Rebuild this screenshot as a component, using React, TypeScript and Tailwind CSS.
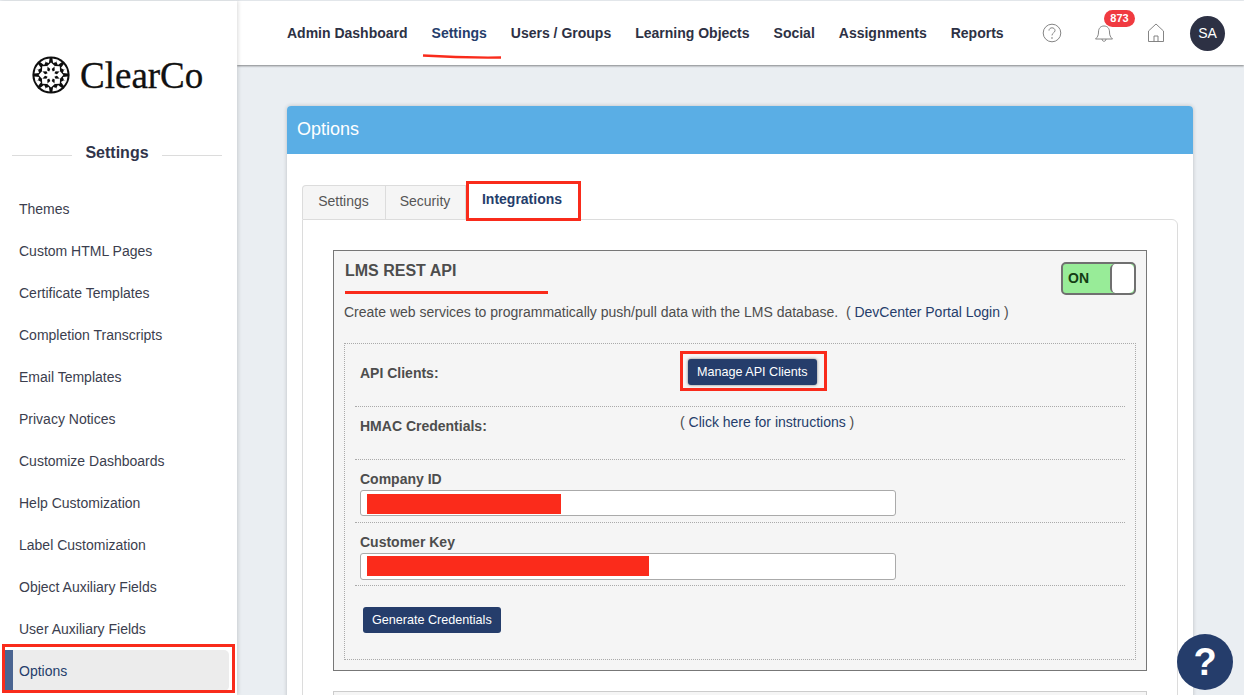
import React from "react";

const items = [
  "Themes",
  "Custom HTML Pages",
  "Certificate Templates",
  "Completion Transcripts",
  "Email Templates",
  "Privacy Notices",
  "Customize Dashboards",
  "Help Customization",
  "Label Customization",
  "Object Auxiliary Fields",
  "User Auxiliary Fields",
];

const nav = ["Admin Dashboard", "Settings", "Users / Groups", "Learning Objects", "Social", "Assignments", "Reports"];

function Rosette() {
  const ring = Array.from({ length: 8 }, (_, i) => i * 45);
  return (
    <svg width="38" height="38" viewBox="0 0 38 38" className="shrink-0">
      <circle cx="19" cy="19" r="18.6" fill="#0e0e0e" />
      {ring.map((a) => (
        <g key={a} transform={`rotate(${a} 19 19)`}>
          <path d="M19 6.6 L23 10.2 L19 13.6 L15 10.2 Z" fill="#fff" />
          <path d="M19 2.2 L24 3.2 L21.6 7.2 L19 5 Z" fill="#fff" transform="rotate(22.5 19 19)" />
          <path d="M19 2.2 L14 3.2 L16.4 7.2 L19 5 Z" fill="#fff" transform="rotate(22.5 19 19)" />
        </g>
      ))}
      <path d="M19 11.5 L20.8 15.6 L24.3 13.7 L22.4 17.2 L26.5 19 L22.4 20.8 L24.3 24.3 L20.8 22.4 L19 26.5 L17.2 22.4 L13.7 24.3 L15.6 20.8 L11.5 19 L15.6 17.2 L13.7 13.7 L17.2 15.6 Z" fill="#fff" />
    </svg>
  );
}

function Label({ children }: { children: React.ReactNode }) {
  return <div className="text-[14px] leading-[20px] font-bold text-[#4d4d4d]">{children}</div>;
}

export default function App() {
  return (
    <div className="relative flex h-[695px] w-[1244px] overflow-hidden bg-[#eaeef2] text-[14px] font-['Liberation_Sans',sans-serif]">
      <aside className="z-10 mt-px flex w-[237px] shrink-0 flex-col bg-white shadow-[1px_0_4px_rgba(0,0,0,0.15)]">
        <div className="flex h-[93px] items-end pl-[32px]">
          <Rosette />
          <span className="mb-[-2px] ml-[10px] font-['Liberation_Serif',serif] text-[37px] leading-[40px] text-[#111] [-webkit-text-stroke:0.3px_#111]">ClearCo</span>
        </div>
        <div className="mt-[47px] flex items-center pl-[12px] pr-[15px]">
          <div className="mt-[4px] h-px w-[60px] bg-[#dcdcdc]" />
          <div className="flex-1 text-center text-[16px] leading-[24px] font-bold text-[#30344a]">Settings</div>
          <div className="mt-[4px] h-px w-[60px] bg-[#dcdcdc]" />
        </div>
        <ul className="mt-[23px] flex flex-col">
          {items.map((t) => (
            <li key={t} className="flex h-[42px] items-center pl-[19px] text-[14px] text-[#3b3e4e]">
              {t}
            </li>
          ))}
          <li className="relative ml-[5px] mr-[8px] flex h-[41px] items-center rounded-r-[5px] border-l-[8px] border-[#4a6491] bg-[#ececec] pl-[6px] pt-[2px] text-[#253d6b]">
            Options
            <span className="absolute bottom-[-2px] left-[-11px] right-[-6px] top-[-6px] border-[3px] border-[#f92b1b]" />
          </li>
        </ul>
      </aside>

      <div className="flex min-w-0 flex-1 flex-col">
        <header className="mt-px flex h-[64px] shrink-0 items-center bg-white pl-[50px] pr-[19px] shadow-[0_1px_2px_rgba(0,0,0,0.45)]">
          <nav className="flex gap-[24px]">
            {nav.map((n) => (
              <div key={n} className="relative whitespace-nowrap">
                <span className={`text-[14px] font-bold ${n === "Settings" ? "text-[#253d6b]" : "text-[#2d3144]"}`}>{n}</span>
                {n === "Settings" && (
                  <svg width="80" height="6" viewBox="0 0 80 6" className="absolute left-[-10px] top-[31px]">
                    <path d="M1 1.5 Q40 4 79 3.5" stroke="#f92b1b" strokeWidth="2.4" fill="none" />
                  </svg>
                )}
              </div>
            ))}
          </nav>
          <div className="ml-auto flex items-center">
            <svg width="20" height="20" viewBox="0 0 20 20" fill="none" stroke="#777" strokeWidth="0.9">
              <circle cx="10" cy="10" r="8.8" />
              <path d="M7 7.6 C7 3.9 13 3.9 13 7.6 C13 9.8 10 9.8 10 12.4" />
              <circle cx="10" cy="15" r="0.4" />
            </svg>
            <div className="relative ml-[32px]">
              <svg width="20" height="20" viewBox="0 0 20 20" fill="none" stroke="#777" strokeWidth="0.9" className="block">
                <path d="M1.5 16 C3.5 14 4.5 12.5 4.5 9 C4.5 5.5 6.5 3 10 3 C13.5 3 15.5 5.5 15.5 9 C15.5 12.5 16.5 14 18.5 16 Z" />
                <path d="M8 16 C8 19 12 19 12 16" />
              </svg>
              <span className="absolute left-[10px] top-[-13px] flex h-[17px] w-[31px] items-center justify-center rounded-full bg-[#f03a40] text-[11px] font-bold text-white">873</span>
            </div>
            <svg width="20" height="22" viewBox="0 0 20 22" fill="none" stroke="#777" strokeWidth="0.9" className="ml-[32px]">
              <path d="M2.5 19.5 V9 L10 2 L17.5 9 V19.5 Z" />
              <path d="M8 19.5 V14 H12 V19.5" />
            </svg>
            <div className="ml-[24px] flex h-[35px] w-[35px] items-center justify-center rounded-full bg-[#2d3144] text-[14px] text-white">SA</div>
          </div>
        </header>

        <main className="min-h-0 flex-1 pl-[50px] pr-[51px] pt-[41px]">
          <section className="h-[700px] overflow-hidden rounded-t-[4px] bg-white shadow-[0_0_4px_rgba(0,0,0,0.2)]">
            <div className="flex h-[48px] items-center bg-[#5aaee5] pb-[2px] pl-[10px] text-[18px] text-white">Options</div>
            <div className="px-[15px] pt-[29px]">
              <div className="flex h-[36px] items-end text-[14px]">
                <div className="flex h-[34px] w-[84px] items-center justify-center rounded-tl-[4px] border border-b-0 border-[#dcdcdc] bg-[#f5f5f5] pb-[2px] pr-[1px] text-[#555]">Settings</div>
                <div className="flex h-[34px] w-[80px] items-center justify-center border-r border-t border-[#dcdcdc] bg-[#f5f5f5] pb-[2px] pr-[1px] text-[#555]">Security</div>
                <div className="relative z-10 mb-[-1px] flex h-[37px] w-[115px] items-start justify-center bg-white pr-[3px] pt-[6px] font-bold text-[#253d6b]">
                  Integrations
                  <span className="absolute bottom-[-1px] left-0 right-0 top-[-2px] border-[3px] border-[#f92b1b]" />
                </div>
              </div>
              <div className="h-[600px] rounded-tr-[6px] border border-[#dcdcdc] px-[30px] pt-[30px]">
                <div className="h-[421px] border border-[#777] bg-[#f5f5f5] px-[10px]">
                  <div className="flex items-start justify-between">
                    <div className="pl-px">
                      <h2 className="mt-[10px] text-[16px] leading-[20px] font-bold text-[#4d4d4d]">LMS REST API</h2>
                      <div className="mt-[10px] h-[3px] w-[203px] bg-[#f92b1b]" />
                    </div>
                    <div className="mt-[11px] flex h-[33px] w-[75px] overflow-hidden rounded-[5px] border-2 border-[#707070] bg-[#98ec98]">
                      <span className="flex-1 pl-[5px] text-[14px] leading-[29px] font-bold text-[#143d14]">ON</span>
                      <span className="w-[24px] rounded-[5px] border-l-2 border-[#707070] bg-white" />
                    </div>
                  </div>
                  <p className="mt-[7px] text-[14px] leading-[20px] text-[#4d4d4d]">
                    Create web services to programmatically push/pull data with the LMS database.&nbsp; ( <span className="text-[#253d6b]">DevCenter Portal Login</span> )
                  </p>
                  <div className="mt-[21px] h-[317px] border border-dotted border-[#aaa] px-[10px]">
                    <div className="flex h-[63px] items-start border-b border-dotted border-[#aaa] pl-[5px]">
                      <div className="mt-[19px] w-[328px]"><Label>API Clients:</Label></div>
                      <div className="relative mt-[15px] rounded-[3px] bg-[#253d6b] px-[9px] py-[5px] text-[12.6px] leading-[16px] text-white shadow-[0_0_3px_rgba(0,0,0,0.5)]">
                        Manage API Clients
                        <span className="absolute bottom-[-6px] left-[-8px] right-[-10px] top-[-8px] border-[3px] border-[#f92b1b]" />
                      </div>
                    </div>
                    <div className="flex h-[53px] items-start border-b border-dotted border-[#aaa] pl-[5px]">
                      <div className="mt-[9px] w-[320px]"><Label>HMAC Credentials:</Label></div>
                      <div className="mt-[5px] text-[14px] leading-[20px] text-[#4d4d4d]">( <span className="text-[#253d6b]">Click here for instructions</span> )</div>
                    </div>
                    <div className="h-[63px] border-b border-dotted border-[#aaa] pl-[5px] pt-[9px]">
                      <Label>Company ID</Label>
                      <div className="mt-[1px] h-[26px] w-[536px] rounded-[3px] border border-[#aaa] bg-white py-[3px] pl-[6px]">
                        <div className="h-[20px] w-[194px] bg-[#fb2b1b]" />
                      </div>
                    </div>
                    <div className="h-[63px] border-b border-dotted border-[#aaa] pl-[5px] pt-[9px]">
                      <Label>Customer Key</Label>
                      <div className="mt-[1px] h-[27px] w-[536px] rounded-[3px] border border-[#aaa] bg-white py-[2px] pl-[6px]">
                        <div className="h-[20px] w-[282px] bg-[#fb2b1b]" />
                      </div>
                    </div>
                    <div className="ml-[8px] mt-[21px] w-fit rounded-[3px] bg-[#253d6b] px-[9px] py-[5px] text-[12.6px] leading-[16px] text-white">Generate Credentials</div>
                  </div>
                </div>
                <div className="mt-[20px] h-[60px] border border-[#ccc] bg-[#f5f5f5]" />
              </div>
            </div>
          </section>
        </main>
      </div>

      <div className="absolute left-[1177px] top-[634px] z-20 flex h-[56px] w-[56px] items-center justify-center rounded-full bg-[#253d6b] text-[38px] font-bold text-white">?</div>
    </div>
  );
}
